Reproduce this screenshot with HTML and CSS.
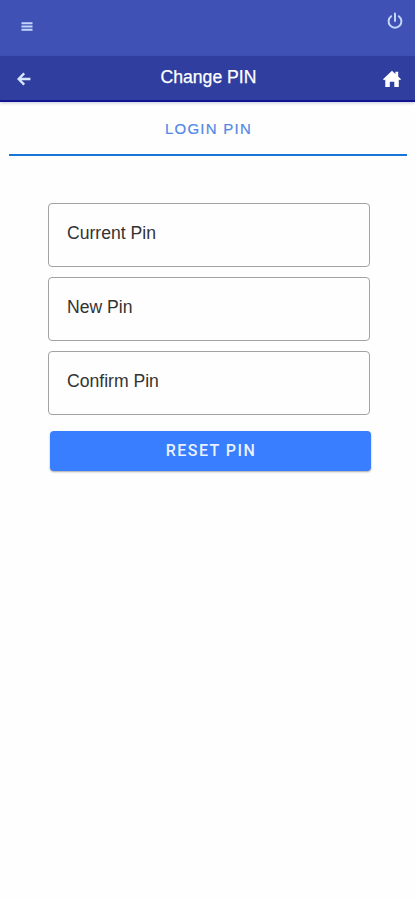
FILE: index.html
```html
<!DOCTYPE html>
<html lang="en">
<head>
<meta charset="utf-8">
<title>Change PIN</title>
<link rel="stylesheet" href="styles.css">
</head>
<body>
<header class="topbar">
  <svg class="menu" viewBox="0 0 12 9"><path d="M.5 1.3h11M.5 4.5h11M.5 7.7h11"/></svg>
  <svg class="power" viewBox="0 0 18 18"><path d="M9 1.5v7.5M5.2 4.2A6.4 6.4 0 1 0 12.8 4.2"/></svg>
</header>
<nav class="titlebar">
  <svg class="back" viewBox="0 0 14 14"><path d="M13.4 7H2M7.2 1.4 1.6 7 7.2 12.6"/></svg>
  <h1 class="title">Change PIN</h1>
  <svg class="home" viewBox="0 0 18 18"><path d="M9 .8 12.4 4V1.8h2.8v4.8L18 9.2l-1 1.1-1.2-.9V17h-4.5v-5.2H6.8V17H2.3V9.4l-1.2.9L0 9.2z"/></svg>
</nav>
<main>
  <div class="tab">LOGIN PIN</div>
  <form class="form">
    <div class="field">Current Pin</div>
    <div class="field">New Pin</div>
    <div class="field">Confirm Pin</div>
    <button class="submit" type="button">RESET PIN</button>
  </form>
</main>
</body>
</html>
```
FILE: styles.css
```css
* { box-sizing: border-box; }
body {
  margin: 0;
  min-height: 900px;
  background: #fefefe;
  font-family: "Liberation Sans", Arial, sans-serif;
}
svg { display: block; fill: none; stroke: #d9e6ff; }
.topbar {
  display: flex;
  justify-content: space-between;
  height: 56px;
  padding: 0 11px 0 21px;
  background: #3f51b5;
}
.menu { width: 12px; height: 9px; margin-top: 22px; stroke-width: 2; stroke: #c3d5fb; }
.power { width: 18px; height: 18px; margin-top: 12px; stroke-width: 2; stroke: #c3d5fb; stroke-linecap: round; }
.titlebar {
  display: flex;
  justify-content: space-between;
  height: 46px;
  padding: 0 14px 0 17px;
  background: #303f9f;
  border-bottom: 2px solid #101490;
  box-shadow: 0 1px 3px rgba(60, 70, 130, .3);
}
.back { width: 14px; height: 14px; margin-top: 16px; stroke-width: 2.4; }
.home { width: 18px; height: 18px; margin-top: 14px; fill: #fff; stroke: none; }
.title {
  margin: 0;
  padding-left: 3px;
  font-size: 17.6px;
  font-weight: 400;
  line-height: 42px;
  color: #fff;
  -webkit-text-stroke: .25px #fff;
}
.tab {
  height: 54px;
  margin: 0 8px 0 9px;
  border-bottom: 2px solid #1976d9;
  padding-left: 1px;
  font-size: 15px;
  line-height: 54px;
  letter-spacing: 1.25px;
  text-align: center;
  color: #5288e4;
  -webkit-text-stroke: .2px #5288e4;
}
.form { width: 323px; margin: 47px 0 0 48px; }
.field {
  width: 322px;
  height: 64px;
  margin-bottom: 10.2px;
  padding-left: 18px;
  border: 1px solid #a2a2a2;
  border-radius: 4px;
  font-size: 17.6px;
  line-height: 58px;
  color: #333;
}
.submit {
  display: block;
  width: 321px;
  height: 40px;
  margin: 15.6px 0 0 2px;
  padding: 0 0 0 1px;
  border: 0;
  border-radius: 4px;
  background: #387eff;
  box-shadow: 0 1px 2px rgba(0, 0, 0, .35);
  font-family: Roboto, "Liberation Sans", sans-serif;
  font-size: 16px;
  font-weight: 500;
  letter-spacing: 1.45px;
  color: #e8f1ff;
}
```
